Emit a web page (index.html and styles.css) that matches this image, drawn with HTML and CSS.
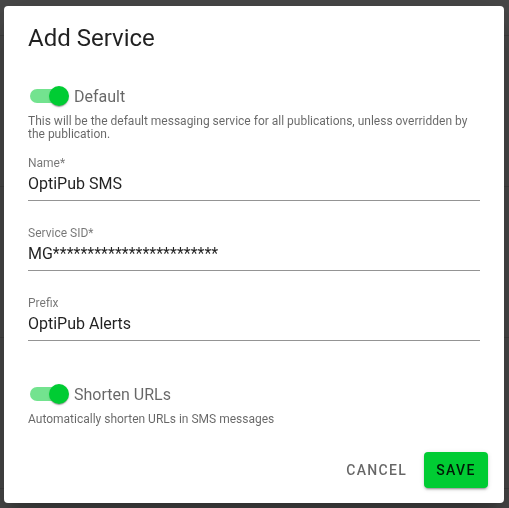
FILE: index.html
```html
<!DOCTYPE html>
<html lang="en">
<head>
    <meta charset="UTF-8">
    <meta name="viewport" content="width=device-width, initial-scale=1.0">
    <title>Messaging Services</title>
    <link rel="stylesheet" href="styles.css">
</head>
<body>
    <!-- page underneath the modal -->
    <div class="page">
        <div class="page-header"></div>
        <div class="page-row"></div>
        <div class="page-row"></div>
        <div class="page-row"></div>
    </div>

    <div class="backdrop">
        <div class="dialog" role="dialog" aria-labelledby="dialog-title">
            <h2 class="dialog-title" id="dialog-title">Add Service</h2>

            <div class="dialog-content">
                <label class="switch-row">
                    <span class="switch"><span class="track"></span><span class="thumb"></span></span>
                    <span class="switch-label">Default</span>
                </label>
                <p class="helper">This will be the default messaging service for all publications, unless overridden by the publication.</p>

                <div class="field field-first">
                    <span class="field-label">Name*</span>
                    <div class="field-value">OptiPub SMS</div>
                </div>
                <div class="field">
                    <span class="field-label">Service SID*</span>
                    <div class="field-value">MG************************</div>
                </div>
                <div class="field">
                    <span class="field-label">Prefix</span>
                    <div class="field-value">OptiPub Alerts</div>
                </div>

                <label class="switch-row switch-row-spaced">
                    <span class="switch"><span class="track"></span><span class="thumb"></span></span>
                    <span class="switch-label">Shorten URLs</span>
                </label>
                <p class="helper">Automatically shorten URLs in SMS messages</p>
            </div>

            <div class="dialog-actions">
                <button class="btn btn-text">Cancel</button>
                <button class="btn btn-save">Save</button>
            </div>
        </div>
    </div>
</body>
</html>
```

FILE: styles.css
```css
:root {
    --green: #00cc33;
    --text-primary: rgba(0, 0, 0, 0.87);
    --text-secondary: rgba(0, 0, 0, 0.6);
    --text-label: rgba(0, 0, 0, 0.54);
}

* {
    box-sizing: border-box;
}

body {
    margin: 0;
    font-family: Roboto, "Liberation Sans", sans-serif;
    background-color: #fff;
    overflow: hidden;
}

/* list page behind the modal */
.page-header {
    height: 36px;
    border-bottom: 1px solid #ddd;
}

.page-row {
    height: 151px;
    border-bottom: 1px solid #ddd;
}

.backdrop {
    position: fixed;
    inset: 0;
    background-color: rgba(0, 0, 0, 0.72);
    padding: 6px 0 0 4px;
}

.dialog {
    width: 500px;
    height: 497px;
    background-color: #fff;
    border-radius: 4px;
    display: flex;
    flex-direction: column;
    box-shadow: 0 11px 15px -7px rgba(0, 0, 0, 0.2),
                0 24px 38px 3px rgba(0, 0, 0, 0.14),
                0 9px 46px 8px rgba(0, 0, 0, 0.12);
}

.dialog-title {
    margin: 0;
    padding: 16px 24px 0;
    font-size: 24px;
    font-weight: 400;
    line-height: 32px;
    color: var(--text-primary);
}

.dialog-content {
    padding: 23px 24px 0;
}

/* switches */
.switch-row {
    display: flex;
    align-items: center;
    height: 38px;
    padding-left: 2px;
}

.switch-row-spaced {
    margin-top: 34px;
}

.switch {
    display: flex;
    align-items: center;
}

.track {
    width: 34px;
    height: 14px;
    border-radius: 7px;
    background-color: var(--green);
    opacity: 0.55;
}

.thumb {
    width: 20px;
    height: 20px;
    margin-left: -15px;
    border-radius: 50%;
    background-color: var(--green);
    box-shadow: 0 2px 1px -1px rgba(0, 0, 0, 0.2),
                0 1px 1px 0 rgba(0, 0, 0, 0.14),
                0 1px 3px 0 rgba(0, 0, 0, 0.12);
}

.switch-label {
    margin-left: 5px;
    font-size: 16px;
    color: var(--text-secondary);
}

.helper {
    margin: 0;
    font-size: 12px;
    line-height: 13px;
    color: var(--text-secondary);
}

/* text fields */
.field {
    margin-top: 24px;
}

.field-first {
    margin-top: 14px;
}

.field-label {
    display: block;
    font-size: 12px;
    line-height: 16px;
    color: var(--text-label);
}

.field-value {
    font-size: 16px;
    line-height: 23px;
    padding: 1px 0 5px;
    border-bottom: 1px solid rgba(0, 0, 0, 0.42);
    color: var(--text-primary);
}

/* actions */
.dialog-actions {
    margin-top: auto;
    display: flex;
    justify-content: flex-end;
    align-items: center;
    gap: 9px;
    padding: 0 16px 15px;
}

.btn {
    height: 36px;
    border: none;
    border-radius: 4px;
    font-family: inherit;
    font-size: 14px;
    font-weight: 500;
    letter-spacing: 1.3px;
    text-transform: uppercase;
    cursor: pointer;
}

.btn-text {
    padding: 0 8px;
    background: none;
    color: var(--text-secondary);
}

.btn-save {
    min-width: 64px;
    padding: 0 12px;
    background-color: var(--green);
    color: var(--text-primary);
    box-shadow: 0 3px 1px -2px rgba(0, 0, 0, 0.2),
                0 2px 2px 0 rgba(0, 0, 0, 0.14),
                0 1px 5px 0 rgba(0, 0, 0, 0.12);
}
```
